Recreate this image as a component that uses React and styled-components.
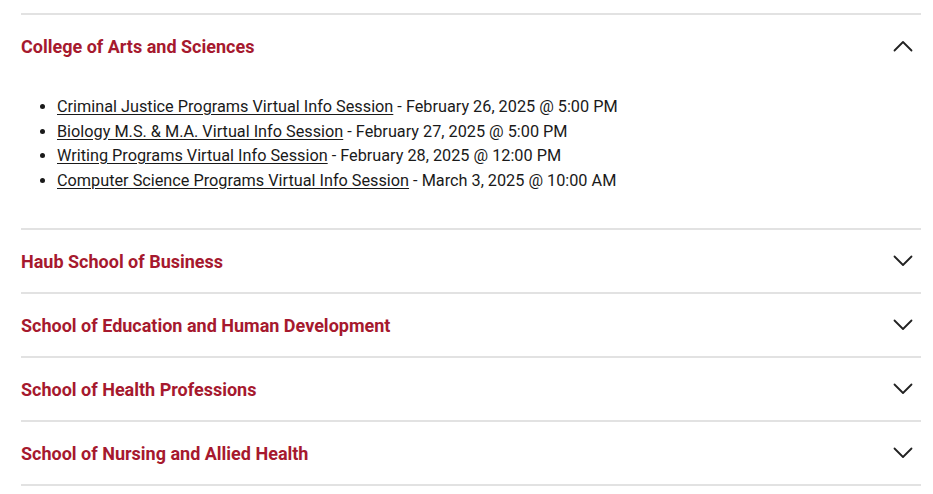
import React, { useState } from "react";
import styled, { createGlobalStyle } from "styled-components";

const Global = createGlobalStyle`
  html, body { margin: 0; padding: 0; background: #fff; }
  body { font-family: Roboto, "Liberation Sans", Arial, sans-serif; }
`;

const Page = styled.div`
  padding: 13px 12px 0 21px;
`;

const Accordion = styled.div`
  width: 900px;
  border-bottom: 2px solid #e2e2e2;
`;

const Item = styled.div`
  border-top: 2px solid #e2e2e2;
`;

const Header = styled.button`
  all: unset;
  box-sizing: border-box;
  width: 100%;
  height: 62px;
  display: flex;
  align-items: center;
  justify-content: space-between;
  cursor: pointer;
  padding-right: 8px;
`;

const Title = styled.span`
  font-family: Roboto, "Liberation Sans", Arial, sans-serif;
  font-weight: 700;
  font-size: 18px;
  color: #a6192e;
`;

const Chevron = styled.svg`
  width: 20px;
  height: 12px;
  flex: none;
`;

const Panel = styled.div`
  padding: 18px 0 35px;
`;

const List = styled.ul`
  margin: 0;
  padding-left: 36px;
  font-size: 16.25px;
  line-height: 24.6px;
  color: #1a1a1a;
`;

const Link = styled.a`
  color: #1a1a1a;
  text-decoration: underline;
  text-underline-offset: 2px;
`;

const sections = [
  {
    title: "College of Arts and Sciences",
    events: [
      ["Criminal Justice Programs Virtual Info Session", "February 26, 2025 @ 5:00 PM"],
      ["Biology M.S. & M.A. Virtual Info Session", "February 27, 2025 @ 5:00 PM"],
      ["Writing Programs Virtual Info Session", "February 28, 2025 @ 12:00 PM"],
      ["Computer Science Programs Virtual Info Session", "March 3, 2025 @ 10:00 AM"],
    ],
  },
  { title: "Haub School of Business", events: [] },
  { title: "School of Education and Human Development", events: [] },
  { title: "School of Health Professions", events: [] },
  { title: "School of Nursing and Allied Health", events: [] },
];

function Arrow({ up }) {
  return (
    <Chevron viewBox="0 0 20 12" fill="none">
      <path
        d={up ? "M1.5 10.5 L10 2 L18.5 10.5" : "M1.5 1.5 L10 10 L18.5 1.5"}
        stroke="#222"
        strokeWidth="1.8"
        strokeLinecap="round"
        strokeLinejoin="round"
      />
    </Chevron>
  );
}

export default function App() {
  const [open, setOpen] = useState(0);
  return (
    <Page>
      <Global />
      <Accordion>
        {sections.map((s, i) => (
          <Item key={s.title}>
            <Header onClick={() => setOpen(open === i ? -1 : i)}>
              <Title>{s.title}</Title>
              <Arrow up={open === i} />
            </Header>
            {open === i && (
              <Panel>
                <List>
                  {s.events.map(([name, date]) => (
                    <li key={name}>
                      <Link href="#">{name}</Link> - {date}
                    </li>
                  ))}
                </List>
              </Panel>
            )}
          </Item>
        ))}
      </Accordion>
    </Page>
  );
}
